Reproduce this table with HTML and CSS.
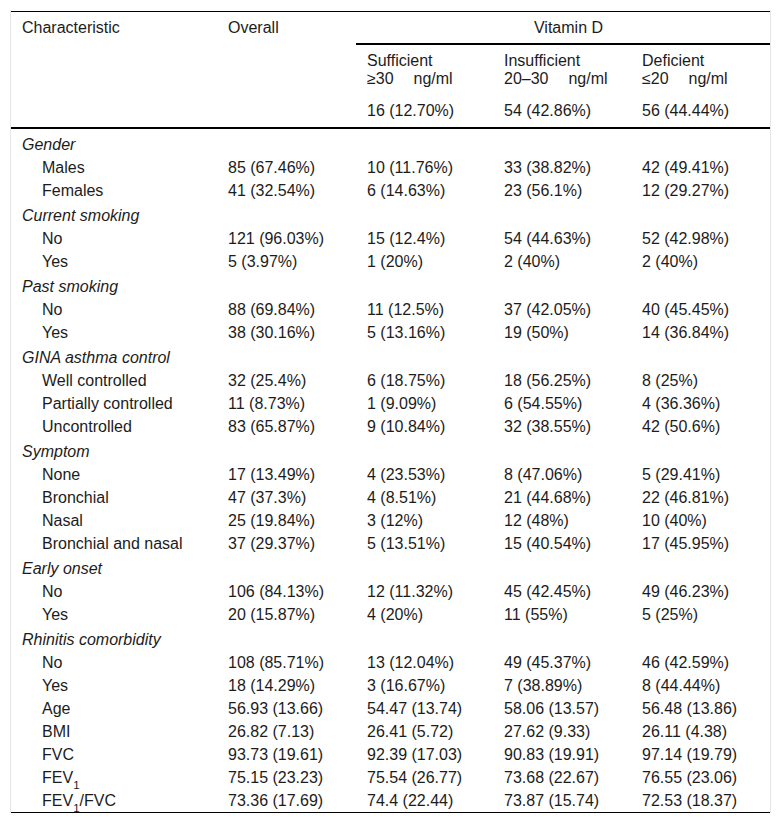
FILE: index.html
```html
<!DOCTYPE html>
<html lang="en">
<head>
<meta charset="utf-8">
<title>Vitamin D table</title>
<link rel="stylesheet" href="styles.css">
</head>
<body>
<div class="wrap">
<table class="data">
<colgroup>
<col class="c1"><col class="c2"><col class="c3"><col class="c4"><col class="c5">
</colgroup>
<thead>
<tr class="h1">
<th rowspan="3">Characteristic</th>
<th rowspan="3">Overall</th>
<th colspan="3" class="group">Vitamin D</th>
</tr>
<tr class="h2">
<th>Sufficient<br>≥30 <span class="unit">ng/ml</span></th>
<th>Insufficient<br>20–30 <span class="unit">ng/ml</span></th>
<th>Deficient<br>≤20 <span class="unit">ng/ml</span></th>
</tr>
<tr class="h3">
<th>16 (12.70%)</th>
<th>54 (42.86%)</th>
<th>56 (44.44%)</th>
</tr>
</thead>
<tbody>
<tr class="cat first"><td colspan="5">Gender</td></tr>
<tr><td class="lab">Males</td><td>85 (67.46%)</td><td>10 (11.76%)</td><td>33 (38.82%)</td><td>42 (49.41%)</td></tr>
<tr><td class="lab">Females</td><td>41 (32.54%)</td><td>6 (14.63%)</td><td>23 (56.1%)</td><td>12 (29.27%)</td></tr>
<tr class="cat"><td colspan="5">Current smoking</td></tr>
<tr><td class="lab">No</td><td>121 (96.03%)</td><td>15 (12.4%)</td><td>54 (44.63%)</td><td>52 (42.98%)</td></tr>
<tr><td class="lab">Yes</td><td>5 (3.97%)</td><td>1 (20%)</td><td>2 (40%)</td><td>2 (40%)</td></tr>
<tr class="cat"><td colspan="5">Past smoking</td></tr>
<tr><td class="lab">No</td><td>88 (69.84%)</td><td>11 (12.5%)</td><td>37 (42.05%)</td><td>40 (45.45%)</td></tr>
<tr><td class="lab">Yes</td><td>38 (30.16%)</td><td>5 (13.16%)</td><td>19 (50%)</td><td>14 (36.84%)</td></tr>
<tr class="cat"><td colspan="5">GINA asthma control</td></tr>
<tr><td class="lab">Well controlled</td><td>32 (25.4%)</td><td>6 (18.75%)</td><td>18 (56.25%)</td><td>8 (25%)</td></tr>
<tr><td class="lab">Partially controlled</td><td>11 (8.73%)</td><td>1 (9.09%)</td><td>6 (54.55%)</td><td>4 (36.36%)</td></tr>
<tr><td class="lab">Uncontrolled</td><td>83 (65.87%)</td><td>9 (10.84%)</td><td>32 (38.55%)</td><td>42 (50.6%)</td></tr>
<tr class="cat"><td colspan="5">Symptom</td></tr>
<tr><td class="lab">None</td><td>17 (13.49%)</td><td>4 (23.53%)</td><td>8 (47.06%)</td><td>5 (29.41%)</td></tr>
<tr><td class="lab">Bronchial</td><td>47 (37.3%)</td><td>4 (8.51%)</td><td>21 (44.68%)</td><td>22 (46.81%)</td></tr>
<tr><td class="lab">Nasal</td><td>25 (19.84%)</td><td>3 (12%)</td><td>12 (48%)</td><td>10 (40%)</td></tr>
<tr><td class="lab">Bronchial and nasal</td><td>37 (29.37%)</td><td>5 (13.51%)</td><td>15 (40.54%)</td><td>17 (45.95%)</td></tr>
<tr class="cat"><td colspan="5">Early onset</td></tr>
<tr><td class="lab">No</td><td>106 (84.13%)</td><td>12 (11.32%)</td><td>45 (42.45%)</td><td>49 (46.23%)</td></tr>
<tr><td class="lab">Yes</td><td>20 (15.87%)</td><td>4 (20%)</td><td>11 (55%)</td><td>5 (25%)</td></tr>
<tr class="cat"><td colspan="5">Rhinitis comorbidity</td></tr>
<tr><td class="lab">No</td><td>108 (85.71%)</td><td>13 (12.04%)</td><td>49 (45.37%)</td><td>46 (42.59%)</td></tr>
<tr><td class="lab">Yes</td><td>18 (14.29%)</td><td>3 (16.67%)</td><td>7 (38.89%)</td><td>8 (44.44%)</td></tr>
<tr><td class="lab">Age</td><td>56.93 (13.66)</td><td>54.47 (13.74)</td><td>58.06 (13.57)</td><td>56.48 (13.86)</td></tr>
<tr><td class="lab">BMI</td><td>26.82 (7.13)</td><td>26.41 (5.72)</td><td>27.62 (9.33)</td><td>26.11 (4.38)</td></tr>
<tr><td class="lab">FVC</td><td>93.73 (19.61)</td><td>92.39 (17.03)</td><td>90.83 (19.91)</td><td>97.14 (19.79)</td></tr>
<tr><td class="lab">FEV<sub>1</sub></td><td>75.15 (23.23)</td><td>75.54 (26.77)</td><td>73.68 (22.67)</td><td>76.55 (23.06)</td></tr>
<tr class="last"><td class="lab">FEV<sub>1</sub>/FVC</td><td>73.36 (17.69)</td><td>74.4 (22.44)</td><td>73.87 (15.74)</td><td>72.53 (18.37)</td></tr>
</tbody>
</table>
</div>
</body>
</html>
```
FILE: styles.css
```css
html, body {
  margin: 0;
  padding: 0;
  background: #ffffff;
}

body {
  font-family: "Liberation Sans", Arial, Helvetica, sans-serif;
  font-size: 16px;
  color: #1c1c1c;
}

.wrap {
  margin: 10px 0 0 10px;
  width: 759px;
  padding-top: 1px;
  border-left: 1px solid #e6e6e6;
  border-right: 1px solid #e6e6e6;
}

.data {
  width: 759px;
  table-layout: fixed;
  border-collapse: collapse;
  border-top: 1px solid #000;
  border-bottom: 1px solid #000;
}

.c1 { width: 206px; }
.c2 { width: 139px; }
.c3 { width: 137px; }
.c4 { width: 138px; }
.c5 { width: 139px; }

.data th,
.data td {
  padding: 2px 0 2px 11px;
  line-height: 19px;
  text-align: left;
  vertical-align: top;
  font-weight: normal;
  white-space: nowrap;
}

.data thead tr.h1 th {
  padding-top: 6px;
  padding-bottom: 6px;
}

.data thead th.group {
  text-align: center;
  border-bottom: 2px solid #000;
}

.data thead tr.h2 th,
.data thead tr.h3 th {
  line-height: 18.4px;
  padding-top: 7px;
  padding-bottom: 6.5px;
}

.data thead {
  border-bottom: 2px solid #000;
}

.unit {
  margin-left: 15.5px;
}

.data tr.cat td {
  font-style: italic;
  padding-top: 4px;
}

.data tr.cat.first td {
  padding-top: 5.8px;
}

.data td.lab {
  padding-left: 31px;
}

.data sub {
  font-size: 11.5px;
  line-height: 0;
  vertical-align: baseline;
  position: relative;
  top: 6px;
}
```
